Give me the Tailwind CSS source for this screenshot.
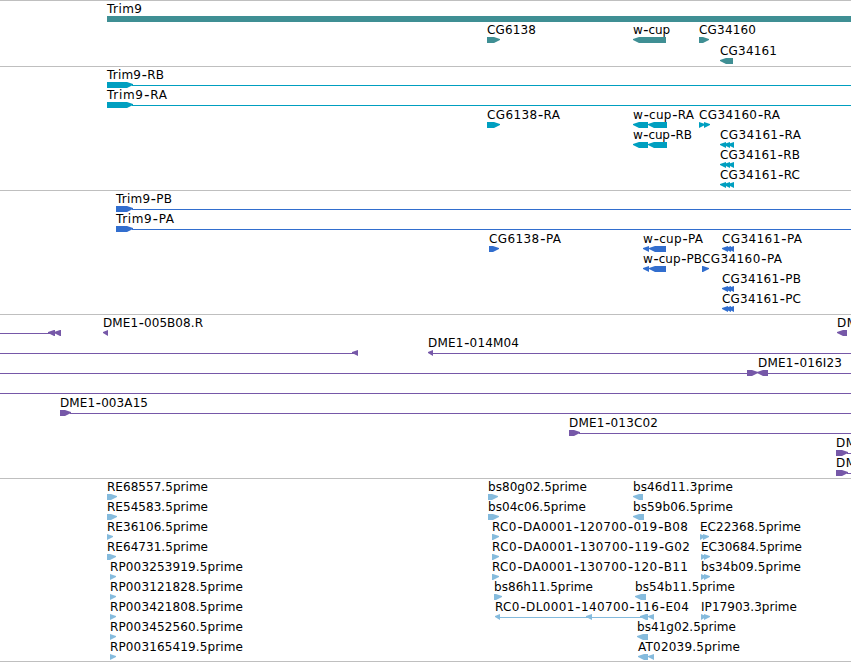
<!DOCTYPE html>
<html lang="en">
<head>
  <meta charset="UTF-8">
  <meta name="viewport" content="width=device-width,initial-scale=1.0"/>
  <title>Genome Browser</title>
  <script src="https://cdn.jsdelivr.net/npm/@tailwindcss/browser@4"></script>
</head>
<body class="bg-white overflow-hidden">
  <main id="tracks" class="flex flex-col w-[851px] h-[662px] overflow-hidden border-b border-[#bfbfbf]">
    <section id="genes" class="h-[66px] shrink-0 border-t border-[#bfbfbf] pt-[2px] text-[#3f8f94]"></section>
    <section id="transcripts" class="h-[124px] shrink-0 border-t border-[#bfbfbf] pt-[2px] text-[#009fc0]"></section>
    <section id="proteins" class="h-[124px] shrink-0 border-t border-[#bfbfbf] pt-[2px] text-[#326ece]"></section>
    <section id="clones" class="h-[164px] shrink-0 border-t border-[#bfbfbf] pt-[2px] text-[#7658a8]"></section>
    <section id="ests" class="h-[183px] shrink-0 border-t border-[#bfbfbf] pt-[2px] text-[#85bbdd]"></section>
  </main>

  <script>
    // ---- DATA ----
    // label: [text, start, end]; shape: [kind, start, end] where kind is
    // '>' forward exon, '<' reverse exon, '=' plain bar, '-' intron line
    const trim = [['>', 107, 133], ['-', 132, 851]];
    const trimP = [['>', 116, 133], ['-', 132, 851]];
    const wcup = [['<', 633, 648], ['<', 648, 667]];
    const wcupP = [['<', 643, 649], ['<', 649, 666]];
    const cg61 = [['<', 720, 726], ['<', 724, 730], ['<', 728, 734]];
    const cg61P = [['<', 722, 728], ['<', 725, 731], ['<', 728, 734]];

    const data = {
      genes: [
        { labels: [['Trim9', 107, 142]], shapes: [['=', 107, 851]] },
        { labels: [['CG6138', 487, 536], ['w-cup', 633, 670], ['CG34160', 699, 756]], shapes: [['>', 487, 500], ['<', 633, 666], ['>', 699, 709]] },
        { labels: [['CG34161', 720, 777]], shapes: [['<', 720, 733]] }
      ],
      transcripts: [
        { labels: [['Trim9-RB', 107, 164]], shapes: trim },
        { labels: [['Trim9-RA', 107, 167]], shapes: trim },
        { labels: [['CG6138-RA', 487, 560], ['w-cup-RA', 633, 694], ['CG34160-RA', 699, 780]], shapes: [['>', 487, 500], ...wcup, ['>', 699, 705], ['>', 704, 710]] },
        { labels: [['w-cup-RB', 633, 692], ['CG34161-RA', 720, 801]], shapes: [...wcup, ...cg61] },
        { labels: [['CG34161-RB', 720, 800]], shapes: cg61 },
        { labels: [['CG34161-RC', 720, 800]], shapes: cg61 }
      ],
      proteins: [
        { labels: [['Trim9-PB', 116, 172]], shapes: trimP },
        { labels: [['Trim9-PA', 116, 174]], shapes: trimP },
        { labels: [['CG6138-PA', 489, 561], ['w-cup-PA', 643, 703], ['CG34161-PA', 722, 802]], shapes: [['>', 489, 499], ...wcupP, ...cg61P] },
        { labels: [['w-cup-PB', 643, 702], ['CG34160-PA', 702, 782]], shapes: [...wcupP, ['>', 702, 709]] },
        { labels: [['CG34161-PB', 722, 801]], shapes: cg61P },
        { labels: [['CG34161-PC', 722, 801]], shapes: cg61P }
      ],
      clones: [
        { labels: [['DME1-005B08.R', 103, 203], ['DM', 837, 857]], shapes: [['-', 0, 50], ['<', 48, 55], ['<', 54, 61], ['<', 103, 108], ['<', 837, 847]] },
        { labels: [['DME1-014M04', 428, 519]], shapes: [['-', 0, 354], ['<', 352, 358], ['<', 428, 433], ['-', 433, 851]] },
        { labels: [['DME1-016I23', 758, 842]], shapes: [['-', 0, 747], ['>', 747, 758], ['<', 757, 768], ['-', 768, 851]] },
        { labels: [], shapes: [['-', 0, 851]] },
        { labels: [['DME1-003A15', 60, 148]], shapes: [['>', 60, 71], ['-', 70, 851]] },
        { labels: [['DME1-013C02', 569, 658]], shapes: [['>', 569, 580], ['-', 579, 851]] },
        { labels: [['DM', 836, 856]], shapes: [['>', 836, 848], ['-', 847, 851]] },
        { labels: [['DM', 836, 856]], shapes: [['>', 836, 848], ['-', 847, 851]] }
      ],
      ests: [
        { labels: [['RE68557.5prime', 107, 208], ['bs80g02.5prime', 488, 587], ['bs46d11.3prime', 633, 733]], shapes: [['>', 107, 117], ['>', 488, 498], ['<', 633, 643]] },
        { labels: [['RE54583.5prime', 107, 208], ['bs04c06.5prime', 488, 586], ['bs59b06.5prime', 633, 733]], shapes: [['>', 107, 117], ['>', 488, 499], ['<', 633, 644]] },
        { labels: [['RE36106.5prime', 107, 208], ['RC0-DA0001-120700-019-B08', 492, 688], ['EC22368.5prime', 700, 801]], shapes: [['>', 107, 113], ['>', 492, 499], ['>', 700, 705], ['>', 703, 709]] },
        { labels: [['RE64731.5prime', 107, 208], ['RC0-DA0001-130700-119-G02', 492, 690], ['EC30684.5prime', 701, 802]], shapes: [['>', 107, 116], ['>', 492, 499], ['>', 701, 706], ['>', 704, 710]] },
        { labels: [['RP003253919.5prime', 110, 243], ['RC0-DA0001-130700-120-B11', 492, 688], ['bs34b09.5prime', 701, 801]], shapes: [['>', 110, 116], ['>', 492, 499], ['>', 701, 706], ['>', 704, 710]] },
        { labels: [['RP003121828.5prime', 110, 243], ['bs86h11.5prime', 494, 593], ['bs54b11.5prime', 635, 735]], shapes: [['>', 110, 116], ['>', 494, 502], ['<', 635, 646]] },
        { labels: [['RP003421808.5prime', 110, 243], ['RC0-DL0001-140700-116-E04', 495, 689], ['IP17903.3prime', 701, 797]], shapes: [['>', 110, 116], ['<', 495, 500], ['-', 498, 642], ['<', 586, 592], ['<', 640, 648], ['<', 648, 654], ['>', 701, 706], ['>', 704, 710]] },
        { labels: [['RP003452560.5prime', 110, 243], ['bs41g02.5prime', 637, 736]], shapes: [['>', 110, 116], ['<', 637, 648]] },
        { labels: [['RP003165419.5prime', 110, 243], ['AT02039.5prime', 638, 740]], shapes: [['>', 110, 116], ['<', 638, 648], ['<', 648, 654]] }
      ]
    };

    // ---- DRAWING ----
    function drawShape([kind, a, b]) {
      if (kind === '-') return `<rect x="${a}" y="16" width="${b - a}" height="1"/>`;
      if (kind === '=') return `<rect x="${a}" y="13" width="${b - a}" height="6"/>`;
      const head = Math.min(6, b - a);
      return kind === '>'
        ? `<path d="M${a} 13H${b - head}L${b} 15V16L${b - head} 19H${a}Z"/>`
        : `<path d="M${b} 13H${a + head}L${a} 15V16L${a + head} 19H${b}Z"/>`;
    }
    // hyphens are set a little wider than the font's own, then the baseline is restored
    function drawLabel([text, a, b]) {
      const body = text.replace(/-(.)/g, '<tspan class="text-[16px] tracking-[-1.5px] font-[Noto_Sans,sans-serif]" dx="0.6" dy="1">-</tspan><tspan dx="1.6" dy="-1">$1</tspan>');
      return `<text class="fill-black" x="${a}" y="10" textLength="${b - a}">${body}</text>`;
    }
    for (const [id, lanes] of Object.entries(data)) {
      const laneClass = id === 'genes' ? 'h-[21px]' : 'h-[20px]';
      document.getElementById(id).innerHTML = lanes.map(lane => `
        <svg class="block w-[851px] ${laneClass} overflow-visible fill-current text-[12px] font-[DejaVu_Sans,sans-serif]">
          ${lane.shapes.map(drawShape).join('')}
          ${lane.labels.map(drawLabel).join('')}
        </svg>`).join('');
    }
  </script>
</body>
</html>
